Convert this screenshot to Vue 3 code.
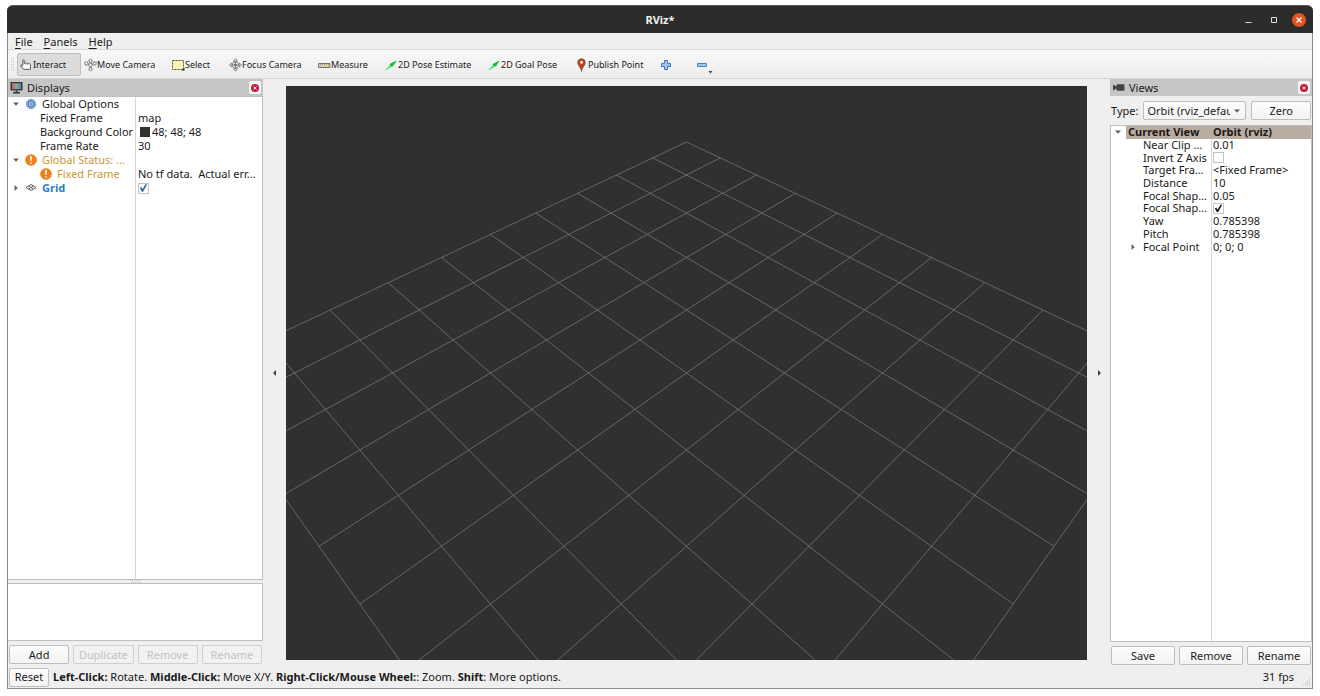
<script setup>
import { ref } from 'vue'

const tools = [
  { icon: 'hand', label: 'Interact', active: true },
  { icon: 'move', label: 'Move Camera' },
  { icon: 'select', label: 'Select' },
  { icon: 'focus', label: 'Focus Camera' },
  { icon: 'ruler', label: 'Measure' },
  { icon: 'arrow', label: '2D Pose Estimate' },
  { icon: 'arrow', label: '2D Goal Pose' },
  { icon: 'pin', label: 'Publish Point' },
]

const displays = [
  { name: 'Global Options', level: 0, arrow: 'down', icon: 'gear' },
  { name: 'Fixed Frame', level: 1, value: 'map' },
  { name: 'Background Color', level: 1, value: '48; 48; 48', swatch: true },
  { name: 'Frame Rate', level: 1, value: '30' },
  { name: 'Global Status: …', level: 0, arrow: 'down', icon: 'warn', tone: 'warning' },
  { name: 'Fixed Frame', level: 1, icon: 'warn', tone: 'warning', value: 'No tf data.\u00a0 Actual err…' },
  { name: 'Grid', level: 0, arrow: 'right', icon: 'grid', tone: 'enabled', check: true, checked: true },
]

const views = [
  { name: 'Current View', value: 'Orbit (rviz)', arrow: 'down', current: true },
  { name: 'Near Clip …', value: '0.01' },
  { name: 'Invert Z Axis', check: true, checked: false },
  { name: 'Target Fra…', value: '<Fixed Frame>' },
  { name: 'Distance', value: '10' },
  { name: 'Focal Shap…', value: '0.05' },
  { name: 'Focal Shap…', check: true, checked: true },
  { name: 'Yaw', value: '0.785398' },
  { name: 'Pitch', value: '0.785398' },
  { name: 'Focal Point', value: '0; 0; 0', arrow: 'right' },
]

const viewType = ref('orbit')

// Ground grid seen by an orbit camera: distance 10, yaw and pitch 45 degrees.
const focal = 693
const project = (i, j) => {
  const depth = 10 + (i + j) / 2
  const x = (focal * (i - j) * Math.SQRT1_2) / depth
  const y = (-focal * (i + j)) / 2 / depth
  return `${x.toFixed(2)} ${y.toFixed(2)}`
}
const gridLines = []
for (let k = -5; k <= 5; k++) {
  gridLines.push(`M${project(k, -5)}L${project(k, 5)}`)
  gridLines.push(`M${project(-5, k)}L${project(5, k)}`)
}
const gridPath = gridLines.join('')
</script>

<template>
  <div class="desktop">
    <div class="window">
      <header class="titlebar">
        <h1>RViz*</h1>
        <div class="window-buttons">
          <button type="button" aria-label="Minimize"><svg viewBox="0 0 14 14"><path d="M3.500 9.500h6" stroke="#ddd" fill="none" /></svg></button>
          <button type="button" aria-label="Maximize"><svg viewBox="0 0 14 14"><path d="M4.500 4.500h5v5h-5z" stroke="#ddd" fill="none" /></svg></button>
          <button type="button" aria-label="Close"><svg viewBox="0 0 14 14"><circle cx="7" cy="7" r="7" fill="#e2541f" /><path d="M4.500 4.500l5 5M9.500 4.500l-5 5" stroke="#fff" stroke-width="1.200" fill="none" /></svg></button>
        </div>
      </header>

      <nav class="menubar">
        <button type="button"><u>F</u>ile</button>
        <button type="button"><u>P</u>anels</button>
        <button type="button"><u>H</u>elp</button>
      </nav>

      <div class="toolbar">
        <svg class="grip" viewBox="0 0 4 14"><path d="M.5 0v14M2.500 0v14" stroke="#c8c8c8" stroke-dasharray="1 1" /></svg>
        <button v-for="t in tools" :key="t.label" type="button" class="tool" :class="{ active: t.active }">
          <svg v-if="t.icon === 'hand'" viewBox="0 0 15 15"><path d="M3.300 8V2.500q0-1 .8-1t.8 1V5.800l1.300-.6 1.300.6 1.300-.5 1.200.7 1.500.2.600.6V12q0 .5-.5.5H4.100L.7 8.300q-.2-1.300 1-.8l1.600 1.200" fill="#fff" stroke="#444" /><path d="M6.800 6V7.500M8.800 6V7.500" stroke="#777" fill="none" stroke-width=".7" /></svg>
          <svg v-else-if="t.icon === 'move'" viewBox="0 0 13 14"><g fill="#fff" stroke="#777" stroke-width=".9"><path d="M6.500.8l2 2.200H7.400v2H5.600V3H4.500zM6.500 13.200l2-2.200H7.400V9H5.600v2H4.500zM.5 4.300l2.800-.5-.5 1 2 1-.8 1.600-2-1-.5 1zM12.500 4.300l-2.800-.5.5 1-2 1 .8 1.600 2-1 .5 1z" /><circle cx="6.500" cy="7" r="1.700" /></g></svg>
          <svg v-else-if="t.icon === 'select'" viewBox="0 0 13 14"><path d="M.5 2.500h11v9H.5z" fill="#fbf5b4" stroke="#55523a" stroke-dasharray="2 1" /><path d="M9.500 12.500H12.500V9.500z" fill="#222" /></svg>
          <svg v-else-if="t.icon === 'focus'" viewBox="0 0 13 14"><g fill="#fff" stroke="#777" stroke-width=".9"><path d="M6.500.8l2 2.400h-4zM6.500 13.200l2-2.400h-4zM.4 7l2.500-2v4zM12.600 7l-2.500-2v4z" /><circle cx="6.500" cy="7" r="3.200" /><path d="M6.500 3v8M2.500 7h8" /><circle cx="6.500" cy="7" r="1.200" fill="#777" /></g></svg>
          <svg v-else-if="t.icon === 'ruler'" viewBox="0 0 13 14"><path d="M.5 5.500h11.500v4H.5z" fill="#d9d2ac" stroke="#77736a" /><path d="M2.500 5.500v2M4.500 5.500v1.500M6.500 5.500v2M8.500 5.500v1.500M10.500 5.500v2" stroke="#8b8672" stroke-width=".7" /></svg>
          <svg v-else-if="t.icon === 'arrow'" viewBox="0 0 13 14"><path d="M.5 11.700L5 7.500 4.500 6.300 11.800 2.400 8 8.800 6.800 8.500 1 12.200z" fill="#3be25a" /><path d="M4.500 6.300L11.800 2.400 6.800 8.500z" fill="#17b93c" /></svg>
          <svg v-else viewBox="0 0 11 14" class="i-pin"><path d="M4.500 13.500C4 9.500.7 7.500.7 4.500a3.800 3.800 0 0 1 7.600 0C8.300 7.500 5 9.500 4.500 13.500z" fill="#b5482a" stroke="#7d3826" stroke-width=".6" /><circle cx="4.500" cy="4.300" r="1.500" fill="#f5e4dc" /></svg>
          <span>{{ t.label }}</span>
        </button>
        <button type="button" class="tool" aria-label="Add tool">
          <svg viewBox="0 0 13 14"><path d="M4.500 2.500h3v3h3v3h-3v3h-3v-3h-3v-3h3z" fill="#a5c6ea" stroke="#3f78b8" /></svg>
        </button>
        <button type="button" class="tool" aria-label="Remove tool">
          <svg viewBox="0 0 13 14"><path d="M1.500 5.500h9v3h-9z" fill="#a5c6ea" stroke="#4a82c0" /></svg>
          <svg class="drop" viewBox="0 0 5 3"><path d="M.5 0h4l-2 2.500z" fill="#444" /></svg>
        </button>
      </div>

      <main class="workspace">
        <aside class="dock left">
          <div class="dock-title">
            <svg viewBox="0 0 13 13"><path d="M.5 1h12v8.500H.5z" fill="#333" /><path d="M2 2.200h3v6H2z" fill="#c4707a" /><path d="M5 2.200h3v6H5z" fill="#77b184" /><path d="M8 2.200h3v6H8z" fill="#6e86bb" /><path d="M5.500 9.500h2v1.500h2.500v1.500H3V11h2.500z" fill="#333" /></svg>
            <h2>Displays</h2>
            <button type="button" class="close" aria-label="Close Displays"><svg viewBox="0 0 12 12"><circle cx="6" cy="6" r="4" fill="#c8193c" /><path d="M4.500 4.500l3 3M7.500 4.500l-3 3" stroke="#fff" /></svg></button>
          </div>
          <div class="tree">
            <table>
              <colgroup><col class="name-col"><col></colgroup>
              <tbody>
                <tr v-for="(r, n) in displays" :key="n">
                  <th scope="row" :class="['level-' + r.level, r.tone]">
                    <div class="cell">
                      <svg v-if="r.arrow" class="expander" viewBox="0 0 8 8"><path v-if="r.arrow === 'down'" d="M1 2.500h6L4 5.800z" fill="#666" /><path v-else d="M2.500 1v6l3.300-3z" fill="#666" /></svg>
                      <svg v-if="r.icon === 'gear'" class="row-icon" viewBox="0 0 12 12"><circle cx="6" cy="6" r="4.700" fill="#7fa6d8" stroke="#5b87c2" stroke-dasharray="1.600 1" /><circle cx="6" cy="6" r="2.700" fill="#b5cdea" stroke="#4c7cba" /><circle cx="6" cy="6" r="1" fill="#4c7cba" /></svg>
                      <svg v-else-if="r.icon === 'warn'" class="row-icon" viewBox="0 0 12 12"><circle cx="6" cy="6" r="5.800" fill="#ee7f1b" /><path d="M5 2.300h2l-.4 4.700H5.400z" fill="#fff" /><circle cx="6" cy="8.800" r=".9" fill="#fff" /></svg>
                      <svg v-else-if="r.icon === 'grid'" class="row-icon" viewBox="0 0 12 12"><path d="M6 2.500l5 3-5 3-5-3zM3.500 4l5 3M8.500 4l-5 3" fill="none" stroke="#555" stroke-width=".9" /></svg>
                      <span>{{ r.name }}</span>
                    </div>
                  </th>
                  <td>
                    <div class="cell">
                      <i v-if="r.swatch" class="swatch"></i>
                      <input v-if="r.check" type="checkbox" :checked="r.checked" :aria-label="r.name">
                      <span v-else>{{ r.value }}</span>
                    </div>
                  </td>
                </tr>
              </tbody>
            </table>
          </div>
          <div class="splitter"><svg viewBox="0 0 12 3"><path d="M0 .5h12M1 2.500h12" stroke="#c4c4c4" stroke-dasharray="1 1" /></svg></div>
          <div class="description"></div>
          <div class="actions">
            <button type="button" class="btn">Add</button>
            <button type="button" class="btn" disabled>Duplicate</button>
            <button type="button" class="btn" disabled>Remove</button>
            <button type="button" class="btn" disabled>Rename</button>
          </div>
        </aside>

        <button type="button" class="collapse" aria-label="Hide left panel"><svg viewBox="0 0 8 8"><path d="M5 1v6L2 4z" fill="#444" /></svg></button>
        <div class="viewport">
          <svg viewBox="-400.500 -287 801 574" preserveAspectRatio="xMidYMid slice"><path :d="gridPath" fill="none" stroke="#757575" stroke-width=".8" /></svg>
        </div>
        <button type="button" class="collapse" aria-label="Hide right panel"><svg viewBox="0 0 8 8"><path d="M3 1v6l3-3z" fill="#444" /></svg></button>

        <aside class="dock right">
          <div class="dock-title">
            <svg viewBox="0 0 13 13"><path d="M1 3.500l3.500 2V4q0-.7.7-.7h6.600q.7 0 .7.7v5q0 .7-.7.700H5.200q-.7 0-.7-.7V7.500L1 9.500z" fill="#444" /></svg>
            <h2>Views</h2>
            <button type="button" class="close" aria-label="Close Views"><svg viewBox="0 0 12 12"><circle cx="6" cy="6" r="4" fill="#c8193c" /><path d="M4.500 4.500l3 3M7.500 4.500l-3 3" stroke="#fff" /></svg></button>
          </div>
          <div class="type-row">
            <label for="view-type">Type:</label>
            <div class="select">
              <select id="view-type" v-model="viewType">
                <option value="orbit">Orbit (rviz_default_plugins)</option>
              </select>
              <svg viewBox="0 0 8 8"><path d="M1 2.500h6L4 5.800z" fill="#666" /></svg>
            </div>
            <button type="button" class="btn">Zero</button>
          </div>
          <div class="tree">
            <table>
              <colgroup><col class="name-col"><col></colgroup>
              <tbody>
                <tr v-for="(r, n) in views" :key="n" :class="{ current: r.current }">
                  <th scope="row">
                    <div class="cell">
                      <svg v-if="r.arrow" class="expander" viewBox="0 0 8 8"><path v-if="r.arrow === 'down'" d="M1 2.500h6L4 5.800z" fill="#666" /><path v-else d="M2.500 1v6l3.300-3z" fill="#666" /></svg>
                      <span>{{ r.name }}</span>
                    </div>
                  </th>
                  <td>
                    <div class="cell">
                      <input v-if="r.check" type="checkbox" :checked="r.checked" :aria-label="r.name">
                      <span v-else>{{ r.value }}</span>
                    </div>
                  </td>
                </tr>
              </tbody>
            </table>
          </div>
          <div class="actions">
            <button type="button" class="btn">Save</button>
            <button type="button" class="btn">Remove</button>
            <button type="button" class="btn">Rename</button>
          </div>
        </aside>
      </main>

      <footer class="statusbar">
        <button type="button" class="btn reset">Reset</button>
        <p><b>Left-Click:</b> Rotate. <b>Middle-Click:</b> Move X/Y. <b>Right-Click/Mouse Wheel:</b>: Zoom. <b>Shift</b>: More options.</p>
        <span class="fps">31 fps</span>
        <svg class="resize" viewBox="0 0 9 9"><path d="M7 1h1M5 3h3M3 5h5M1 7h7" stroke="#bbb" stroke-dasharray="1 1" /></svg>
      </footer>
    </div>
  </div>
</template>

<style>
body {
  background: #fff;
}
</style>

<style scoped>
.desktop {
  box-sizing: border-box;
  min-height: 100vh;
  padding: 5px 7px 7px;
  display: flex;
  font-family: "Noto Sans", "Open Sans", sans-serif;
  font-size: 11px;
  line-height: 14px;
  color: #1a1a1a;
}
.desktop * {
  box-sizing: border-box;
}
button,
select {
  font: inherit;
  color: inherit;
  padding: 0;
  margin: 0;
  border: 0;
  background: none;
}
svg {
  display: block;
  flex: none;
}
.window {
  flex: 1;
  min-width: 0;
  display: flex;
  flex-direction: column;
  background: #efefef;
  border: 1px solid #8a8a8a;
  border-top: 0;
  border-radius: 6px 6px 0 0;
}
.titlebar {
  display: grid;
  grid-template-columns: 1fr auto 1fr;
  align-items: center;
  height: 28px;
  margin: 0 -1px;
  padding: 0 7px;
  background: #2c2c2c;
  border-top: 1px solid #555;
  border-radius: 6px 6px 0 0;
  color: #f2f2f2;
}
h1 {
  grid-column: 2;
  margin: 0;
  font-size: 11px;
  font-weight: 700;
}
.window-buttons {
  display: flex;
  justify-content: flex-end;
  gap: 11px;
}
.window-buttons svg {
  width: 14px;
  height: 14px;
}
.menubar {
  display: flex;
  gap: 11px;
  height: 17px;
  padding: 2px 7px 0;
  border-bottom: 1px solid #d9d9d9;
}
.menubar u {
  text-underline-offset: 2px;
}
.toolbar {
  display: grid;
  grid-template-columns: 9px 67px 88px 57px 89px 67px 103px 89px 83px 36px 30px;
  align-items: center;
  height: 29px;
  padding-top: 1px;
  background: linear-gradient(#f8f8f8, #ededed);
  border-bottom: 1px solid #d5d5d5;
  font-size: 9px;
}
.grip {
  width: 4px;
  height: 14px;
  margin-left: 3px;
}
.tool {
  display: flex;
  align-items: center;
  position: relative;
  height: 23px;
  white-space: nowrap;
}
.tool svg {
  width: 13px;
  height: 14px;
}
.tool.active {
  width: 64px;
  padding-left: 2px;
  background: #dcdcdc;
  border: 1px solid #bdbdbd;
  border-radius: 2px;
}
.tool .i-pin {
  width: 11px;
}
.tool .drop {
  position: absolute;
  right: 13px;
  bottom: 2px;
  width: 5px;
  height: 3px;
}
.workspace {
  flex: 1;
  display: flex;
  min-height: 0;
}
.dock {
  display: flex;
  flex-direction: column;
  flex: none;
}
.left {
  width: 255px;
}
.right {
  width: 202px;
}
.dock-title {
  display: flex;
  align-items: center;
  gap: 4px;
  height: 17px;
  padding: 0 2px;
  background: #c6c6c6;
}
.dock-title > svg {
  width: 13px;
  height: 13px;
}
h2 {
  flex: 1;
  margin: 0;
  font-size: 11px;
  font-weight: 400;
}
.close {
  width: 12px;
  height: 13px;
  background: #f6f6f6;
  border-radius: 2px;
}
.close svg {
  width: 12px;
  height: 12px;
}
.tree {
  flex: 1;
  background: linear-gradient(#d8d8d8, #d8d8d8) 127px 0 / 1px 100% no-repeat #fff;
  border: 1px solid #bfbfbf;
}
.left .tree {
  border-left: 0;
}
.right .tree {
  background-position-x: 100px;
}
table {
  width: 100%;
  table-layout: fixed;
  border-collapse: collapse;
}
.left .name-col {
  width: 127px;
}
.right .name-col {
  width: 100px;
}
th,
td {
  padding: 0;
  font-weight: 400;
  text-align: left;
  white-space: nowrap;
}
.cell {
  display: flex;
  align-items: center;
  height: 14px;
}
td .cell {
  padding-left: 3px;
}
.left th .cell {
  gap: 5px;
}
.left .level-0 .cell {
  padding-left: 4px;
}
.left .level-1 .cell {
  padding-left: 32px;
}
.expander {
  width: 8px;
  height: 8px;
}
.row-icon {
  width: 12px;
  height: 12px;
}
.warning {
  color: #cd9632;
}
.enabled {
  color: #2a7cc7;
  font-weight: 700;
}
.swatch {
  width: 10px;
  height: 10px;
  margin: 0 2px;
  background: #303030;
}
input[type="checkbox"] {
  appearance: none;
  width: 11px;
  height: 11px;
  margin: 0;
  background: #fff;
  border: 1px solid #c4c4c4;
  display: grid;
  place-items: center;
}
input[type="checkbox"]:checked::before {
  content: "";
  width: 8px;
  height: 8px;
  background: #111;
  clip-path: polygon(5% 50%, 22% 38%, 38% 65%, 75% 2%, 95% 5%, 45% 98%, 30% 98%);
}
.left input[type="checkbox"]:checked::before {
  background: #2b6496;
}
.right table {
  height: 127px;
}
.right .cell {
  height: 12px;
}
.right th .cell {
  padding-left: 32px;
}
.right th .cell:has(.expander) {
  gap: 6px;
  padding-left: 18px;
}
.right .current th .cell {
  padding-left: 3px;
}
.right td .cell {
  padding-left: 2px;
}
.current {
  background: linear-gradient(90deg, #fff 15px, #b9aca0 15px);
}
.current th,
.current td {
  font-weight: 700;
}
.splitter {
  display: flex;
  justify-content: center;
  height: 3px;
}
.splitter svg {
  width: 12px;
  height: 3px;
}
.description {
  height: 58px;
  background: #fff;
  border: 1px solid #bfbfbf;
  border-left: 0;
}
.actions {
  display: flex;
  gap: 4px;
  padding: 4px 1px 3px;
}
.btn {
  flex: 1;
  height: 19px;
  background: linear-gradient(#fdfdfd, #f3f3f3);
  border: 1px solid #bdbdbd;
  border-radius: 2px;
  text-align: center;
}
.btn:disabled {
  color: #c2c2c2;
  background: #f2f2f2;
  border-color: #cfcfcf;
}
.right .actions {
  padding-bottom: 2px;
}
.collapse {
  display: flex;
  align-items: center;
  justify-content: center;
  width: 23px;
  flex: none;
}
.collapse svg {
  width: 8px;
  height: 8px;
}
.viewport {
  flex: 1;
  min-width: 0;
  position: relative;
  margin: 7px 0;
  background: #303030;
  overflow: hidden;
}
.viewport svg {
  position: absolute;
  inset: 0;
  width: 100%;
  height: 100%;
}
.type-row {
  display: flex;
  align-items: center;
  gap: 5px;
  height: 29px;
  padding: 0 1px;
}
.type-row .btn {
  flex: 1;
}
.select {
  display: flex;
  align-items: center;
  width: 103px;
  height: 19px;
  padding-right: 4px;
  background: linear-gradient(#fdfdfd, #f3f3f3);
  border: 1px solid #bdbdbd;
  border-radius: 2px;
}
.select select {
  appearance: none;
  flex: 1;
  min-width: 0;
  margin-right: 3px;
  padding-left: 3px;
  height: 17px;
  overflow: hidden;
  text-overflow: clip;
}
.select svg {
  width: 8px;
  height: 8px;
}
.statusbar {
  display: flex;
  align-items: center;
  height: 21px;
  padding: 0 1px 1px;
}
.statusbar .reset {
  flex: none;
  width: 40px;
}
p {
  flex: 1;
  margin: 0 0 0 4px;
}
.fps {
  margin-right: 8px;
}
.resize {
  align-self: flex-end;
  width: 9px;
  height: 9px;
}
</style>
